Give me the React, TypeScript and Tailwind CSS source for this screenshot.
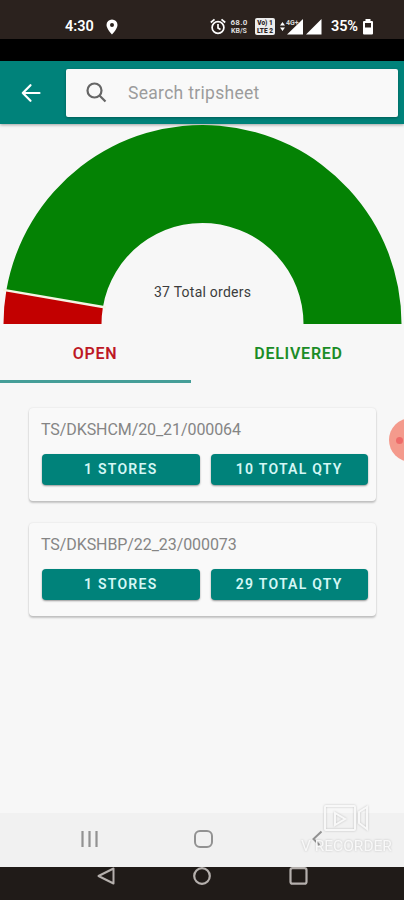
import { useState } from 'react';

interface Tripsheet {
  id: string;
  stores: number;
  qty: number;
}

const TRIPSHEETS: Tripsheet[] = [
  { id: 'TS/DKSHCM/20_21/000064', stores: 1, qty: 10 },
  { id: 'TS/DKSHBP/22_23/000073', stores: 1, qty: 29 },
];

const OPEN_ORDERS = 2;
const TOTAL_ORDERS = 37;

// Half donut geometry
const CX = 202.5;
const CY = 200;
const OUTER = 199;
const INNER = 101;

function slice(from: number, to: number) {
  const point = (r: number, t: number) =>
    `${CX - r * Math.cos(Math.PI * t)} ${CY - r * Math.sin(Math.PI * t)}`;
  return `M${point(OUTER, from)} A${OUTER} ${OUTER} 0 0 1 ${point(OUTER, to)} L${point(INNER, to)} A${INNER} ${INNER} 0 0 0 ${point(INNER, from)} Z`;
}

function StatusBar() {
  return (
    <div className="h-[39px] shrink-0 bg-[#2b221e] pl-[65px] pr-[30px] pt-[17px] flex justify-between text-white">
      <div className="flex h-[19px] items-center gap-[11px]">
        <span className="w-[30px] text-[14.5px] leading-[19px] font-semibold">4:30</span>
        <svg width="12" height="16" viewBox="0 0 12 16" fill="currentColor">
          <path fillRule="evenodd" d="M6 .5A5.5 5.5 0 0 0 .5 6C.5 9.7 6 15.5 6 15.5S11.5 9.7 11.5 6A5.5 5.5 0 0 0 6 .5ZM6 4a2 2 0 1 1 0 4a2 2 0 0 1 0-4Z" />
        </svg>
      </div>
      <div className="flex h-[19px] items-center">
        <svg width="16" height="17" viewBox="0 0 16 17" fill="none" stroke="currentColor" strokeWidth="1.7">
          <circle cx="8" cy="9.5" r="5.9" />
          <path d="M8 6v4l2.5 1.5M.8 4.5 4.5 1.3M15.2 4.5 11.5 1.3" />
        </svg>
        <div className="ml-[3px] w-[20px] text-center font-bold text-[#dedede]">
          <p className="text-[8px] leading-[9px] tracking-[0.2px]">68.0</p>
          <p className="text-[7px] leading-[9px]">KB/S</p>
        </div>
        <div className="ml-[6px] flex h-[17px] w-[20px] flex-col justify-center rounded-[2px] bg-[#ececec] text-center text-[6.5px] leading-[8px] font-black text-[#2b221e]">
          <p>Vo) 1</p>
          <p>LTE 2</p>
        </div>
        <div className="relative ml-[5px] h-[17px] w-[24px]">
          <svg width="24" height="17" viewBox="0 0 24 17" fill="currentColor">
            <path d="M0 7.5 2.5 4 5 7.5ZM0 9.5 2.5 13 5 9.5ZM23 1V16.5H7Z" />
          </svg>
          <span className="absolute left-[6px] top-[1px] text-[7px] leading-[8px] font-bold text-[#d8d8d8]">4G+</span>
        </div>
        <svg className="ml-[1px]" width="17" height="17" viewBox="0 0 17 17" fill="currentColor">
          <path d="M16.5 1V16.5H1Z" />
        </svg>
        <span className="ml-[9px] w-[28px] text-[14.5px] leading-[19px] font-semibold tracking-[-0.1px]">35%</span>
        <svg className="ml-[3px]" width="12" height="17" viewBox="0 0 12 17" fill="currentColor">
          <path fillRule="evenodd" d="M3.5 1h5v2H10a1 1 0 0 1 1 1v11.5a1 1 0 0 1-1 1H2a1 1 0 0 1-1-1V4a1 1 0 0 1 1-1H3.5ZM3 5v4.5h6V5Z" />
        </svg>
      </div>
    </div>
  );
}

function Header() {
  return (
    <header className="flex h-[63px] shrink-0 items-center bg-[#00827a] pl-[21px] pr-[6px] shadow-[0_1px_3px_rgba(0,0,0,0.35)]">
      <svg width="20" height="20" viewBox="0 0 20 20" fill="none" stroke="white" strokeWidth="2.2" strokeLinecap="round" strokeLinejoin="round">
        <path d="M18.5 10H1.8M9.5 2.2 1.8 10l7.7 7.8" />
      </svg>
      <label className="ml-[25px] flex h-[48px] flex-1 items-center rounded-[2px] bg-[#f9f9f9] pl-[20px] shadow-[0_1px_3px_rgba(0,0,0,0.3)]">
        <svg width="21" height="21" viewBox="0 0 21 21" fill="none" stroke="#666" strokeWidth="2.2">
          <circle cx="8.5" cy="8.5" r="7" />
          <path d="m13.5 13.5 6 6" />
        </svg>
        <input
          className="ml-[21px] w-[230px] bg-transparent pt-px text-[17.5px] tracking-[0.3px] outline-none placeholder:text-[#9c9c9c]"
          placeholder="Search tripsheet"
        />
      </label>
    </header>
  );
}

function OrdersChart() {
  const split = OPEN_ORDERS / TOTAL_ORDERS;
  return (
    <svg className="shrink-0" width="404" height="202" viewBox="0 0 404 202">
      <path d={slice(split, 1)} fill="#048204" />
      <path d={slice(0, split)} fill="#c20000" />
      <path
        d={`M${CX - 202 * Math.cos(Math.PI * split)} ${CY - 202 * Math.sin(Math.PI * split)} L${CX - 98 * Math.cos(Math.PI * split)} ${CY - 98 * Math.sin(Math.PI * split)}`}
        stroke="#f4f5e4"
        strokeWidth="2.5"
      />
      <text x="202.5" y="173" textAnchor="middle" textLength="97" fontSize="14" fill="#3c3c3c">
        {TOTAL_ORDERS} Total orders
      </text>
    </svg>
  );
}

function TripsheetCard({ sheet }: { sheet: Tripsheet }) {
  const button =
    'h-[31px] rounded-[4px] bg-[#00827a] pb-[1px] text-[14px] font-semibold tracking-[1.25px] text-[#d5f7f5] shadow-[0_1px_2px_rgba(0,0,0,0.4)]';
  return (
    <div className="h-[93px] rounded-[4px] bg-[#f9f9f9] pl-[13px] pr-[8px] pt-[11px] shadow-[0_2px_2px_rgba(0,0,0,0.2),0_0_2px_rgba(0,0,0,0.12)]">
      <p className="-ml-px text-[16px] leading-[22px] tracking-[-0.08px] text-[#858585]">{sheet.id}</p>
      <div className="mt-[13px] grid grid-cols-2 gap-[11px]">
        <button className={button}>{sheet.stores} STORES</button>
        <button className={button}>{sheet.qty} TOTAL QTY</button>
      </div>
    </div>
  );
}

export default function App() {
  const [tab, setTab] = useState<'open' | 'delivered'>('open');

  return (
    <div className="relative flex h-[900px] w-[404px] flex-col overflow-hidden bg-[#f7f7f7] font-['Roboto',sans-serif]">
      <StatusBar />
      <div className="h-[22px] shrink-0 bg-black" />
      <Header />
      <OrdersChart />

      {/* Tabs */}
      <div className="flex h-[57px] shrink-0 text-[16px] font-semibold">
        <button
          onClick={() => setTab('open')}
          className={`w-[191px] border-b-[3px] pt-[2px] pr-[1px] tracking-[0.7px] text-[#bd1825] ${tab === 'open' ? 'border-[#459e98]' : 'border-transparent'}`}
        >
          OPEN
        </button>
        <button
          onClick={() => setTab('delivered')}
          className={`flex-1 border-b-[3px] pl-[2px] pt-[2px] tracking-[0.75px] text-[#1b8c27] ${tab === 'delivered' ? 'border-[#459e98]' : 'border-transparent'}`}
        >
          DELIVERED
        </button>
      </div>

      {/* Tripsheets */}
      <main className="flex flex-1 flex-col gap-[22px] pl-[29px] pr-[28px] pt-[25px]">
        {TRIPSHEETS.map((sheet) => (
          <TripsheetCard key={sheet.id} sheet={sheet} />
        ))}
      </main>

      {/* Navigation bars */}
      <div className="flex h-[54px] shrink-0 items-center bg-[#f1f1f1] pb-[3px] pl-[80px] text-[#929292]">
        <svg width="20" height="18" viewBox="0 0 20 18" fill="none" stroke="currentColor" strokeWidth="2.2">
          <path d="M2.5 1v16M9.5 1v16M16.5 1v16" />
        </svg>
        <svg className="ml-[93px]" width="20" height="20" viewBox="0 0 20 20" fill="none" stroke="currentColor" strokeWidth="2">
          <rect x="2" y="2" width="17" height="16" rx="5" />
        </svg>
        <svg className="ml-[99px]" width="12" height="18" viewBox="0 0 12 18" fill="none" stroke="currentColor" strokeWidth="2">
          <path d="M9.5 1.5 1.5 9l6 6" />
        </svg>
      </div>
      <div className="flex h-[33px] shrink-0 bg-[#201b18] pl-[96px] text-[#b5b0ad]">
        <svg width="20" height="19" viewBox="0 0 20 19" fill="none" stroke="currentColor" strokeWidth="2" strokeLinejoin="round">
          <path d="M17.5 1.5v15L2.5 9Z" />
        </svg>
        <svg className="ml-[76px]" width="20" height="19" viewBox="0 0 20 19" fill="none" stroke="currentColor" strokeWidth="2.2">
          <circle cx="10" cy="9" r="7.8" />
        </svg>
        <svg className="ml-[76px]" width="22" height="19" viewBox="0 0 22 19" fill="none" stroke="currentColor" strokeWidth="2.2">
          <rect x="2.5" y="1.2" width="16" height="15.5" rx="2" />
        </svg>
      </div>

      {/* Floating recorder bubble */}
      <div className="absolute left-[389px] top-[418px] flex h-[44px] w-[44px] items-center rounded-full bg-[#f49a8c] pl-[7px]">
        <span className="h-[7px] w-[7px] rounded-full bg-[#ee6b69]" />
      </div>

      {/* Recorder watermark */}
      <div className="absolute left-[301px] top-[803px] w-[96px] drop-shadow-[0_0_1px_rgba(0,0,0,0.2)]">
        <svg className="ml-[22px]" width="48" height="31" viewBox="0 0 48 31" fill="none" stroke="#f8f8f8" strokeWidth="2">
          <rect x="2" y="3" width="30" height="24" rx="1" />
          <path d="M12 10v12l10-6ZM36 9v11l8 6V4Z" />
        </svg>
        <p className="mt-[3px] text-[15.5px] leading-[18px] whitespace-nowrap text-[#f8f8f8]">V RECORDER</p>
      </div>
    </div>
  );
}
